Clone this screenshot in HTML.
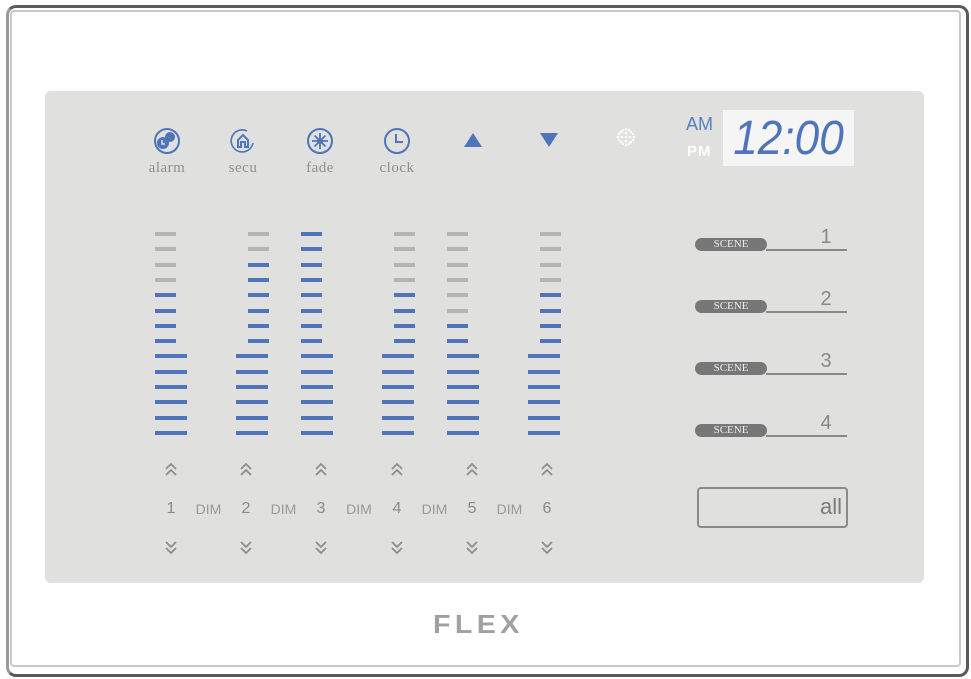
<!DOCTYPE html>
<html><head><meta charset="utf-8"><style>
*{margin:0;padding:0;box-sizing:border-box}
body{width:971px;height:679px;background:#fff;position:relative;overflow:hidden;font-family:"Liberation Sans",sans-serif}
.frame{position:absolute;left:6px;top:5px;width:963px;height:672px;border:3px solid #5a5a5a;border-left-color:#999;border-radius:10px}
.inner{position:absolute;left:10px;top:10px;width:951px;height:657px;border:2px solid #c8c8c8;border-radius:4px}
.panel{position:absolute;left:45px;top:91px;width:879px;height:492px;background:#e0e0df;border-radius:6px}
.b{position:absolute;height:4px;background:#4f74b9}
.g{background:#b4b4b4}
.a{position:absolute}
.n{position:absolute;color:#8a8a8a;font-size:16px;width:30px;text-align:center;top:500px}
.d{position:absolute;color:#999;font-size:14px;width:40px;text-align:center;top:501px}
.lbl{position:absolute;top:160px;width:70px;text-align:center;color:#8f8f8f;font-family:"Liberation Serif",serif;font-size:15px;letter-spacing:0.5px}
.ic{position:absolute;top:127px}
.pill{position:absolute;left:695px;width:72px;height:13px;background:#777;border-radius:7px;color:#eee;font-family:"Liberation Serif",serif;font-size:11px;text-align:center;line-height:13px}
.ln{position:absolute;left:766px;width:81px;height:2px;background:#888}
.sn{position:absolute;left:816px;width:20px;color:#888;font-size:20px;text-align:center}
</style></head><body>
<div class="frame"></div><div class="inner"></div>
<div class="panel"></div>

<svg class="ic" style="left:153px" width="28" height="28" viewBox="0 0 28 28"><circle cx="14" cy="14" r="12" fill="none" stroke="#4f74b9" stroke-width="2"/><circle cx="17" cy="10" r="5" fill="#4f74b9"/><circle cx="10" cy="16" r="6" fill="#4f74b9"/><path d="M9 13v4h3" stroke="#e0e0df" stroke-width="1.5" fill="none"/></svg>
<svg class="ic" style="left:229px" width="28" height="28" viewBox="0 0 28 28"><path d="M24 16A11 11 0 1 1 18 4" fill="none" stroke="#4f74b9" stroke-width="1.6"/><path d="M9 20v-7l5-5 5 5v7h-3v-5h-4v5z" fill="none" stroke="#4f74b9" stroke-width="2"/></svg>
<svg class="ic" style="left:306px" width="28" height="28" viewBox="0 0 28 28"><circle cx="14" cy="14" r="12" fill="none" stroke="#4f74b9" stroke-width="2"/><path d="M14 6v16M6 14h16M8.5 8.5l11 11M19.5 8.5l-11 11" stroke="#4f74b9" stroke-width="1.8"/><circle cx="14" cy="14" r="3" fill="#4f74b9"/></svg>
<svg class="ic" style="left:383px" width="28" height="28" viewBox="0 0 28 28"><circle cx="14" cy="14" r="12" fill="none" stroke="#4f74b9" stroke-width="2"/><path d="M13 7v8h7" fill="none" stroke="#4f74b9" stroke-width="2"/></svg>
<svg style="position:absolute;left:463px;top:132px" width="20" height="16"><path d="M10 1L19 15H1z" fill="#4f74b9"/></svg>
<svg style="position:absolute;left:539px;top:132px" width="20" height="16"><path d="M1 1H19L10 15z" fill="#4f74b9"/></svg>
<svg style="position:absolute;left:615px;top:126px" width="22" height="22" viewBox="0 0 22 22" fill="#fff"><circle cx="11" cy="3" r="1.3"/><circle cx="11" cy="7" r="1.3"/><circle cx="11" cy="11" r="1.3"/><circle cx="11" cy="15" r="1.3"/><circle cx="11" cy="19" r="1.3"/><circle cx="3" cy="11" r="1.3"/><circle cx="7" cy="11" r="1.3"/><circle cx="15" cy="11" r="1.3"/><circle cx="19" cy="11" r="1.3"/><circle cx="6" cy="6" r="1.3"/><circle cx="16" cy="6" r="1.3"/><circle cx="6" cy="16" r="1.3"/><circle cx="16" cy="16" r="1.3"/><circle cx="8" cy="4" r="1.1"/><circle cx="14" cy="4" r="1.1"/><circle cx="8" cy="18" r="1.1"/><circle cx="14" cy="18" r="1.1"/><circle cx="4" cy="8" r="1.1"/><circle cx="18" cy="8" r="1.1"/><circle cx="4" cy="14" r="1.1"/><circle cx="18" cy="14" r="1.1"/></svg>
<div class="lbl" style="left:132px">alarm</div>
<div class="lbl" style="left:208px">secu</div>
<div class="lbl" style="left:285px">fade</div>
<div class="lbl" style="left:362px">clock</div>

<div style="position:absolute;left:686px;top:114px;color:#5a7fc0;font-size:18px">AM</div>
<div style="position:absolute;left:687px;top:143px;color:#fff;font-size:15px;font-weight:bold;letter-spacing:1px">PM</div>
<div style="position:absolute;left:723px;top:110px;width:131px;height:56px;background:#f5f5f5"></div>
<div style="position:absolute;left:723px;top:110px;width:131px;height:56px;color:#4f74b9;font-size:48px;font-style:italic;line-height:57px;text-align:center;transform:scaleX(0.92)">12:00</div>

<div id="bars"></div>

<div class="pill" style="top:238px">SCENE</div><div class="ln" style="top:249px"></div><div class="sn" style="top:226px">1</div>
<div class="pill" style="top:300px">SCENE</div><div class="ln" style="top:311px"></div><div class="sn" style="top:288px">2</div>
<div class="pill" style="top:362px">SCENE</div><div class="ln" style="top:373px"></div><div class="sn" style="top:350px">3</div>
<div class="pill" style="top:424px">SCENE</div><div class="ln" style="top:435px"></div><div class="sn" style="top:412px">4</div>

<div style="position:absolute;left:697px;top:487px;width:151px;height:41px;border:2px solid #8a8a8a;border-radius:4px"></div>
<div style="position:absolute;left:790px;top:494px;width:52px;text-align:right;color:#7a7a7a;font-size:22px">all</div>

<div style="position:absolute;left:433px;top:609px;color:#a0a0a0;font-size:26px;font-weight:bold;letter-spacing:4px;transform:scaleX(1.1);transform-origin:left">FLEX</div>

<script>
var sx=[155,248,301,394,447,540],lx=[155,236,301,382,447,528],gr=[4,2,0,4,6,4],h='';
for(var c=0;c<6;c++){for(var i=0;i<14;i++){var t=Math.round(232+i*15.3);
if(i<8)h+='<div class="b'+(i<gr[c]?' g':'')+'" style="left:'+sx[c]+'px;top:'+t+'px;width:21px"></div>';
else h+='<div class="b" style="left:'+lx[c]+'px;top:'+t+'px;width:32px"></div>';}}
var nx=[171,246,321,397,472,547];
var up='<path d="M2 7L7 2L12 7M2 13L7 8L12 13" fill="none" stroke="#8c8c8c" stroke-width="1.8"/>';
var dn='<path d="M2 1L7 6L12 1M2 7L7 12L12 7" fill="none" stroke="#8c8c8c" stroke-width="1.8"/>';
for(var c=0;c<6;c++){h+='<svg class="a" width="14" height="14" style="left:'+(nx[c]-7)+'px;top:462px">'+up+'</svg>';
h+='<div class="n" style="left:'+(nx[c]-15)+'px">'+(c+1)+'</div>';
h+='<svg class="a" width="14" height="14" style="left:'+(nx[c]-7)+'px;top:541px">'+dn+'</svg>';
if(c<5)h+='<div class="d" style="left:'+((nx[c]+nx[c+1])/2-20)+'px">DIM</div>';}
document.getElementById('bars').innerHTML=h;
</script>
</body></html>
